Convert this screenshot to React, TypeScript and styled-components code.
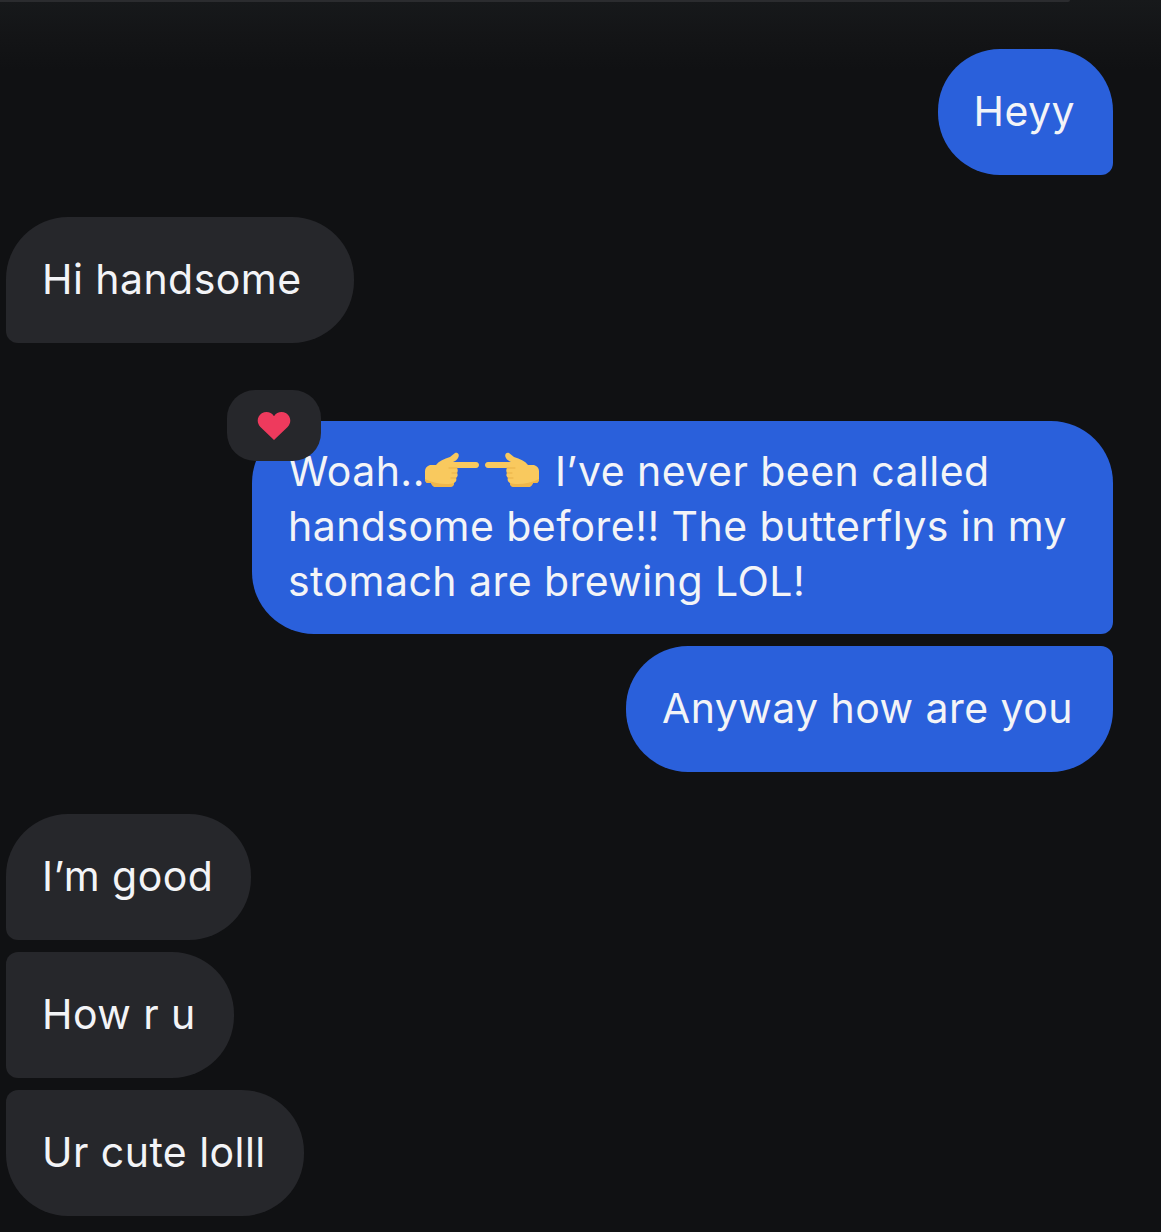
import React from "react";
import styled, { createGlobalStyle } from "styled-components";

const Global = createGlobalStyle`
  html, body { margin: 0; padding: 0; background: #101113; }
  body { font-family: "Inter", "Open Sans", sans-serif; }
`;

const Screen = styled.main`
  width: 1161px;
  height: 1232px;
  box-sizing: border-box;
  overflow: hidden;
  position: relative;
  padding: 49px 48px 0 6px;
  display: flex;
  flex-direction: column;
  background: linear-gradient(#17191b 0, #131416 40px, #101113 70px);
`;

const TopEdge = styled.div`
  position: absolute;
  top: 0;
  left: 0;
  width: 1070px;
  height: 2px;
  border-radius: 0 0 6px 0;
  background: #2b2c2f;
`;

const Row = styled.div<{ $sent?: boolean; $gap: number }>`
  display: flex;
  justify-content: ${(p) => (p.$sent ? "flex-end" : "flex-start")};
  margin-top: ${(p) => p.$gap}px;
`;

const Bubble = styled.div<{ $sent?: boolean; $corners: string; $width?: number; $padEnd?: number }>`
  position: relative;
  box-sizing: border-box;
  min-height: 125.5px;
  width: ${(p) => (p.$width ? `${p.$width}px` : "auto")};
  display: flex;
  align-items: center;
  padding: 24px ${(p) => p.$padEnd ?? 38}px 24px 36px;
  font-size: 41px;
  line-height: 55px;
  font-weight: 400;
  letter-spacing: 0.45px;
  white-space: nowrap;
  color: #f3f4f7;
  background: ${(p) => (p.$sent ? "#2a60db" : "#26272b")};
  border-radius: ${(p) => p.$corners};
`;

const Lines = styled.div`
  display: flex;
  flex-direction: column;
  margin: -1px 0 1px;
`;

const Line = styled.span`
  display: flex;
  align-items: center;
`;

const Reaction = styled.div`
  position: absolute;
  left: -25px;
  top: -31px;
  width: 94px;
  height: 71px;
  border-radius: 28px;
  background: #26272b;
  display: flex;
  align-items: center;
  justify-content: center;
`;

const EmojiPair = styled.span`
  display: inline-flex;
  gap: 4px;
  margin: 0 15px 4px -1px;
`;

const BIG = "62px";
const SMALL = "12px";
const r = (tl: string, tr: string, br: string, bl: string) => `${tl} ${tr} ${br} ${bl}`;

const Hand = ({ flip }: { flip?: boolean }) => (
  <svg width="56" height="38" viewBox="0 0 56 38" style={flip ? { transform: "scaleX(-1)" } : undefined}>
    <path
      d="M1 20c0-3 2-5 5-6h6c3-4 8-6 14-8l5-4c3-1 5 2 3 5-1 2-3 3-5 4h23c4 0 4 6 0 6H33c1 2 1 3 0 5 1 2 1 3-1 5 1 2 0 4-2 5 0 3-2 4-5 4H12c-3 0-4-2-5-4H4c-2 0-3-2-3-4z"
      fill="#f9c95e"
    />
    <path
      d="M1 28c0 2 1 4 3 4h3c1 2 2 4 5 4h13c3 0 5-1 5-4-6 2-20 1-29-4z"
      fill="#efb64a"
    />
    <path d="M33 17h-8M33 22h-5M32 27h-5" stroke="#e6ac42" strokeWidth="0.8" fill="none" strokeLinecap="round" />
  </svg>
);

const Heart = () => (
  <svg width="34" height="30" viewBox="0 0 36 32">
    <path d="M18 31 3.500 17C-1 12.500 0 5.500 5 2.500c4.500-2.500 10-1.500 13 3 3-4.500 8.500-5.500 13-3 5 3 6 10 1.500 14.500z" fill="#ee3a5d" />
  </svg>
);

export default function App() {
  return (
    <>
      <Global />
      <Screen>
        <TopEdge />
        <Row $sent $gap={0}>
          <Bubble $sent $corners={r(BIG, BIG, SMALL, BIG)}>Heyy</Bubble>
        </Row>
        <Row $gap={42.5}>
          <Bubble $padEnd={52} $corners={r(BIG, BIG, BIG, SMALL)}>Hi handsome</Bubble>
        </Row>
        <Row $sent $gap={78.5}>
          <Bubble $sent $width={861} $corners={r(BIG, BIG, SMALL, BIG)}>
            <Reaction><Heart /></Reaction>
            <Lines>
              <Line>Woah..<EmojiPair><Hand /><Hand flip /></EmojiPair>I’ve never been called</Line>
              <Line>handsome before!! The butterflys in my</Line>
              <Line>stomach are brewing LOL!</Line>
            </Lines>
          </Bubble>
        </Row>
        <Row $sent $gap={12}>
          <Bubble $sent $padEnd={40} $corners={r(BIG, SMALL, BIG, BIG)}>Anyway how are you</Bubble>
        </Row>
        <Row $gap={42.5}>
          <Bubble $corners={r(BIG, BIG, BIG, SMALL)}>I’m good</Bubble>
        </Row>
        <Row $gap={12.5}>
          <Bubble $corners={r(SMALL, BIG, BIG, SMALL)}>How r u</Bubble>
        </Row>
        <Row $gap={12.5}>
          <Bubble $corners={r(SMALL, BIG, BIG, BIG)}>Ur cute lolll</Bubble>
        </Row>
      </Screen>
    </>
  );
}
